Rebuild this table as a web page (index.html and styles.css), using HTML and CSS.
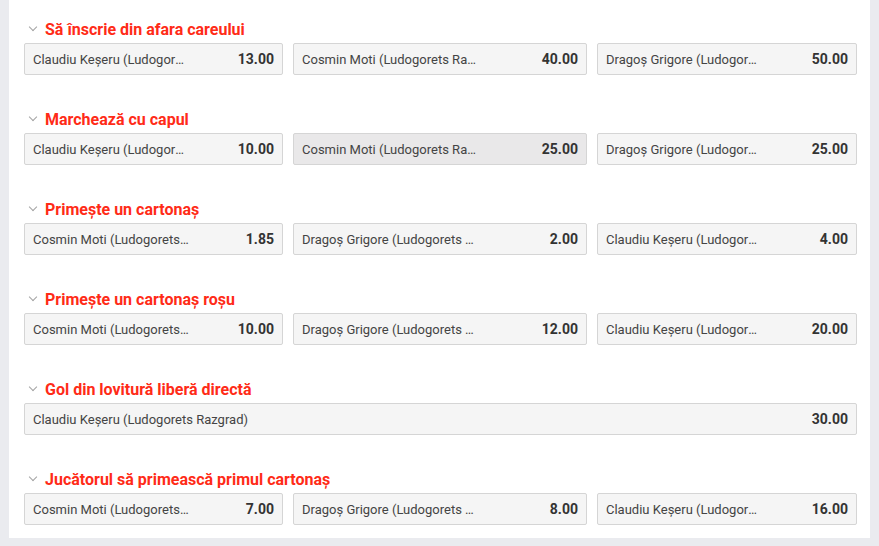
FILE: index.html
```html
<!DOCTYPE html>
<html lang="ro">
<head>
<meta charset="UTF-8">
<title>Pariuri jucători</title>
<link rel="stylesheet" href="styles.css">
</head>
<body>

<div class="panel">

    <!-- Sa inscrie din afara careului -->
    <div class="market">
        <div class="market-title"><span class="chevron"></span>Să înscrie din afara careului</div>
        <div class="odds-row">
            <div class="pick"><span class="name">Claudiu Keșeru (Ludogorets Razgrad)</span><span class="price">13.00</span></div>
            <div class="pick"><span class="name">Cosmin Moti (Ludogorets Razgrad)</span><span class="price">40.00</span></div>
            <div class="pick"><span class="name">Dragoș Grigore (Ludogorets Razgrad)</span><span class="price">50.00</span></div>
        </div>
    </div>

    <div class="market">
        <div class="market-title"><span class="chevron"></span>Marchează cu capul</div>
        <div class="odds-row">
            <div class="pick"><span class="name">Claudiu Keșeru (Ludogorets Razgrad)</span><span class="price">10.00</span></div>
            <div class="pick hover"><span class="name">Cosmin Moti (Ludogorets Razgrad)</span><span class="price">25.00</span></div>
            <div class="pick"><span class="name">Dragoș Grigore (Ludogorets Razgrad)</span><span class="price">25.00</span></div>
        </div>
    </div>

    <div class="market">
        <div class="market-title"><span class="chevron"></span>Primește un cartonaș</div>
        <div class="odds-row">
            <div class="pick"><span class="name">Cosmin Moti (Ludogorets Razgrad)</span><span class="price">1.85</span></div>
            <div class="pick"><span class="name">Dragoș Grigore (Ludogorets Razgrad)</span><span class="price">2.00</span></div>
            <div class="pick"><span class="name">Claudiu Keșeru (Ludogorets Razgrad)</span><span class="price">4.00</span></div>
        </div>
    </div>

    <div class="market">
        <div class="market-title"><span class="chevron"></span>Primește un cartonaș roșu</div>
        <div class="odds-row">
            <div class="pick"><span class="name">Cosmin Moti (Ludogorets Razgrad)</span><span class="price">10.00</span></div>
            <div class="pick"><span class="name">Dragoș Grigore (Ludogorets Razgrad)</span><span class="price">12.00</span></div>
            <div class="pick"><span class="name">Claudiu Keșeru (Ludogorets Razgrad)</span><span class="price">20.00</span></div>
        </div>
    </div>

    <div class="market">
        <div class="market-title"><span class="chevron"></span>Gol din lovitură liberă directă</div>
        <div class="odds-row single">
            <div class="pick"><span class="name">Claudiu Keșeru (Ludogorets Razgrad)</span><span class="price">30.00</span></div>
        </div>
    </div>

    <div class="market">
        <div class="market-title"><span class="chevron"></span>Jucătorul să primească primul cartonaș</div>
        <div class="odds-row">
            <div class="pick"><span class="name">Cosmin Moti (Ludogorets Razgrad)</span><span class="price">7.00</span></div>
            <div class="pick"><span class="name">Dragoș Grigore (Ludogorets Razgrad)</span><span class="price">8.00</span></div>
            <div class="pick"><span class="name">Claudiu Keșeru (Ludogorets Razgrad)</span><span class="price">16.00</span></div>
        </div>
    </div>

</div>

</body>
</html>
```

FILE: styles.css
```css
body {
    margin: 0;
    background-color: #eaebef;
    font-family: Roboto, "Liberation Sans", Arial, sans-serif;
    height: 546px;
    overflow: hidden;
}

/* White sheet that holds all the markets */
.panel {
    margin: 0 9px 0 9px;
    width: 861px;
    background-color: #ffffff;
    padding: 17px 13px 13px 15px;
    box-sizing: border-box;
}

.market {
    margin-bottom: 32px;
}

.market:last-child {
    margin-bottom: 0;
}

/* Market heading with the little collapse arrow */
.market-title {
    display: flex;
    align-items: center;
    height: 24px;
    margin-bottom: 2px;
    color: #ff2b17;
    font-size: 16px;
    font-weight: bold;
}

.chevron {
    width: 5px;
    height: 5px;
    border-right: 1.5px solid #a3a3a3;
    border-bottom: 1.5px solid #a3a3a3;
    transform: rotate(45deg);
    margin: -4px 9px 0 6px;
}

/* Row of selections */
.odds-row {
    display: grid;
    grid-template-columns: 259px 294px minmax(0, 1fr);
    gap: 10px;
}

.odds-row.single {
    grid-template-columns: minmax(0, 1fr);
}

.pick {
    display: flex;
    align-items: center;
    min-width: 0;
    height: 32px;
    padding: 0 8px 0 8px;
    box-sizing: border-box;
    background-color: #f5f5f5;
    border: 1px solid #d5d5d5;
    border-radius: 2px;
    cursor: pointer;
}

.pick.hover {
    background-color: #e9e8e9;
}

.name {
    width: 65%;
    flex: none;
    white-space: nowrap;
    overflow: hidden;
    text-overflow: ellipsis;
    font-size: 13px;
    color: #444444;
    padding-top: 1px;
}

.single .name {
    width: auto;
}

.price {
    margin-left: auto;
    font-size: 14px;
    font-weight: bold;
    color: #333333;
}
```
